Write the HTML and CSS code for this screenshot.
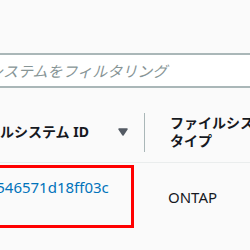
FILE: index.html
```html
<!DOCTYPE html>
<html lang="ja">
  <head>
    <meta charset="UTF-8" />
    <meta name="viewport" content="width=device-width, initial-scale=1.0" />
    <title>ファイルシステム</title>
    <link rel="stylesheet" href="styles.css">
  </head>
  <body>
    <div class="panel">
      <div class="filter">
        <svg class="search-icon" width="16" height="16" viewBox="0 0 16 16">
          <circle cx="7" cy="7" r="5" fill="none" stroke="#545b64" stroke-width="2" />
          <path d="M11 11l4 4" stroke="#545b64" stroke-width="2" />
        </svg>
        <input type="text" class="filter-input" placeholder="ファイルシステムをフィルタリング" />
      </div>

      <table class="fs-table">
        <thead>
          <tr>
            <th class="col-select"></th>
            <th class="col-id">
              <div class="th-inner">
                <span>ファイルシステム ID</span>
                <svg class="sort-icon" width="12" height="10" viewBox="0 0 12 10">
                  <path d="M2 2h8l-4 6z" fill="#545b64" stroke="#545b64" stroke-width="1.5" stroke-linejoin="round" />
                </svg>
              </div>
            </th>
            <th class="col-type">
              <span class="th-label">ファイルシステム タイプ</span>
            </th>
          </tr>
        </thead>
        <tbody>
          <tr>
            <td class="col-select"></td>
            <td class="cell-id">
              <a href="#" class="fs-link">fs-0e546571d18ff03c</a>
            </td>
            <td class="cell-type">ONTAP</td>
          </tr>
        </tbody>
      </table>
    </div>
  </body>
</html>
```

FILE: styles.css
```css
* {
  margin: 0;
  padding: 0;
  box-sizing: border-box;
}

body {
  font-family: "Noto Sans", "Noto Sans CJK JP", sans-serif;
  font-size: 14px;
  color: #16191f;
  background-color: #fafafa;
  overflow: hidden;
}

.panel {
  width: 480px;
  margin-left: -100px;
  padding-top: 53px;
}

/* フィルター入力 */
.filter {
  display: flex;
  align-items: center;
  height: 35px;
  background-color: #fff;
  border: 2px solid #aab7b8;
  border-radius: 2px;
}

.search-icon {
  margin-left: 8px;
  flex-shrink: 0;
}

.filter-input {
  flex: 1;
  border: none;
  outline: none;
  background: transparent;
  margin-left: 2px;
  font-family: inherit;
  font-size: 15px;
  color: #16191f;
}

.filter-input::placeholder {
  color: #879596;
  font-style: italic;
}

/* テーブル */
.fs-table {
  margin-top: 15px;
  border-collapse: collapse;
}

.fs-table th {
  text-align: left;
  font-weight: bold;
  line-height: 18px;
  padding: 11px 0 12px;
  border-bottom: 1px solid #eaeded;
  vertical-align: middle;
}

.col-select {
  width: 42px;
}

.col-id {
  width: 203px;
  position: relative;
}

.col-id::after {
  content: "";
  position: absolute;
  right: 0;
  top: 10px;
  bottom: 10px;
  width: 1px;
  background-color: #aab7b8;
}

.th-inner {
  display: flex;
  align-items: center;
  justify-content: space-between;
  padding: 0 16px;
}

.sort-icon {
  display: block;
}

.fs-table th.col-type {
  padding-left: 25px;
}

.th-label {
  display: block;
  width: 120px;
}

.fs-table td {
  font-size: 15px;
  line-height: 20px;
}

.cell-id {
  position: relative;
  vertical-align: top;
  padding: 14px 16px 34px 20px;
}

/* 赤枠の注釈 */
.cell-id::after {
  content: "";
  position: absolute;
  left: 0;
  top: 2px;
  right: 11px;
  bottom: 3px;
  border: 3px solid #f00;
}

.fs-link {
  color: #0073bb;
  text-decoration: none;
}

.cell-type {
  vertical-align: middle;
  padding-left: 23px;
}
```
